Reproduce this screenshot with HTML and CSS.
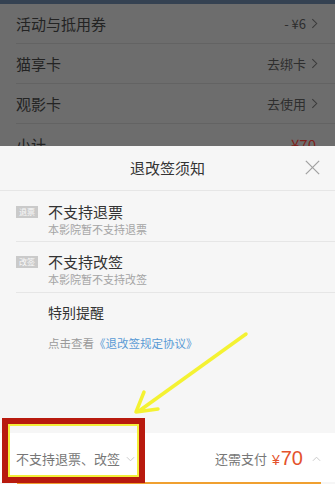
FILE: index.html
```html
<!DOCTYPE html>
<html lang="zh">
<head>
<meta charset="utf-8">
<link rel="stylesheet" href="styles.css">
</head>
<body>
<div class="page">
  <div class="backdrop">
    <div class="topbar"></div>
    <div class="row"><span>活动与抵用券</span><span class="val">- ¥6 <svg class="chev" viewBox="0 0 8 12"><polyline points="1.5,1 6.5,6 1.5,11"/></svg></span></div>
    <div class="row"><span>猫享卡</span><span class="val">去绑卡 <svg class="chev" viewBox="0 0 8 12"><polyline points="1.5,1 6.5,6 1.5,11"/></svg></span></div>
    <div class="row"><span>观影卡</span><span class="val">去使用 <svg class="chev" viewBox="0 0 8 12"><polyline points="1.5,1 6.5,6 1.5,11"/></svg></span></div>
    <div class="row last"><span>小计</span><span class="red">¥70</span></div>
  </div>
  <div class="sheet">
    <div class="sheet-head">
      <span class="title">退改签须知</span>
      <svg class="close" viewBox="0 0 20 20"><line x1="3" y1="3" x2="17" y2="17"/><line x1="17" y1="3" x2="3" y2="17"/></svg>
    </div>
    <div class="item">
      <span class="badge">退票</span>
      <div class="item-text">
        <div class="item-title">不支持退票</div>
        <div class="item-sub">本影院暂不支持退票</div>
      </div>
    </div>
    <div class="item second">
      <span class="badge">改签</span>
      <div class="item-text">
        <div class="item-title">不支持改签</div>
        <div class="item-sub">本影院暂不支持改签</div>
      </div>
    </div>
    <div class="remind">特别提醒</div>
    <div class="link-line">点击查看<span class="link">《退改签规定协议》</span></div>
    <div class="spacer"></div>
    <div class="footer">
      <div class="foot-left">不支持退票、改签 <svg class="chev-s" viewBox="0 0 10 6"><polyline points="1,1 5,5 9,1"/></svg></div>
      <div class="foot-right">还需支付 <span class="price"><span class="yen">¥</span>70</span> <svg class="chev-s" viewBox="0 0 10 6"><polyline points="1,5 5,1 9,5"/></svg></div>
    </div>
    <div class="orange-line"></div>
  </div>
  <div class="highlight"></div>
  <svg class="arrow" viewBox="0 0 335 484"><line x1="246" y1="334" x2="139" y2="411"/><polyline points="144,392 136,412 158,409"/></svg>
</div>
</body>
</html>
```

FILE: styles.css
```css
* { box-sizing: border-box; }
html, body { margin: 0; padding: 0; }
body {
  width: 335px;
  height: 484px;
  overflow: hidden;
  font-family: "Noto Sans CJK SC", "Noto Sans", sans-serif;
}
.page {
  position: relative;
  width: 335px;
  height: 484px;
  display: flex;
  flex-direction: column;
}
.backdrop {
  height: 146px;
  background: #6d6d6d;
  overflow: hidden;
  flex: none;
}
.topbar {
  height: 4px;
  background: #354252;
}
.row {
  height: 40px;
  margin-left: 16px;
  padding-right: 17px;
  border-bottom: 1px solid #636363;
  display: flex;
  align-items: center;
  justify-content: space-between;
  font-size: 15px;
  color: #232323;
}
.row .val {
  font-size: 13px;
  color: #2e2e2e;
  display: flex;
  align-items: center;
  gap: 5px;
}
.row.last { border-bottom: none; }
.row .red { color: #7d1f1a; font-size: 15px; margin-right: 2px; }
.chev {
  width: 7px;
  height: 11px;
  fill: none;
  stroke: #3a3a3a;
  stroke-width: 1.2;
}
.sheet {
  flex: 1;
  background: #f6f6f6;
  display: flex;
  flex-direction: column;
}
.sheet-head {
  position: relative;
  height: 45px;
  border-bottom: 1px solid #e6e6e6;
  display: flex;
  align-items: center;
  justify-content: center;
}
.title {
  font-size: 15px;
  color: #333;
  margin-top: -1px;
}
.close {
  position: absolute;
  right: 13px;
  top: 12px;
  width: 19px;
  height: 19px;
  stroke: #a0a0a0;
  stroke-width: 1.3;
}
.item {
  margin-left: 16px;
  padding: 11px 0 4px;
  border-bottom: 1px solid #e6e6e6;
  display: flex;
  align-items: flex-start;
  gap: 10px;
}
.item.second { padding: 10px 0 5px; }
.badge {
  margin-top: 4px;
  width: 22px;
  height: 12px;
  background: #cacaca;
  color: #fafafa;
  font-size: 8px;
  line-height: 12px;
  text-align: center;
  flex: none;
}
.item-title {
  font-size: 15px;
  line-height: 20px;
  color: #333;
}
.item-sub {
  font-size: 11px;
  line-height: 15px;
  color: #a5a5a5;
}
.remind {
  margin: 9px 0 0 48px;
  font-size: 14px;
  line-height: 20px;
  color: #333;
}
.link-line {
  margin: 13px 0 0 48px;
  font-size: 11.5px;
  line-height: 16px;
  color: #9a9a9a;
}
.link { color: #5a9bd5; }
.spacer { flex: 1; }
.footer {
  height: 49px;
  background: #fff;
  display: flex;
  align-items: center;
  justify-content: space-between;
  padding: 2px 14px 0 16px;
}
.foot-left {
  font-size: 13px;
  color: #777;
  display: flex;
  align-items: center;
  gap: 6px;
}
.foot-right {
  font-size: 13px;
  color: #777;
  display: flex;
  align-items: center;
  gap: 5px;
}
.price {
  color: #e4532c;
  font-family: "Liberation Sans", "Noto Sans", sans-serif;
  font-size: 20px;
  margin-right: 4px;
}
.yen { font-size: 14px; margin-right: 1px; }
.chev-s {
  width: 9px;
  height: 6px;
  fill: none;
  stroke: #c4c4c4;
  stroke-width: 1;
}
.orange-line {
  height: 2px;
  margin: 0 14px 0 17px;
  background: #f0a030;
}
.highlight {
  position: absolute;
  left: 2px;
  top: 418px;
  width: 143px;
  height: 65px;
  border: 6px solid #b81a0e;
  box-shadow: inset 0 0 0 2px #f3ee3a;
}
.arrow {
  position: absolute;
  left: 0;
  top: 0;
  width: 335px;
  height: 484px;
  fill: none;
  stroke: #f4f232;
  stroke-width: 3.5;
  stroke-linecap: round;
  stroke-linejoin: round;
}
```
